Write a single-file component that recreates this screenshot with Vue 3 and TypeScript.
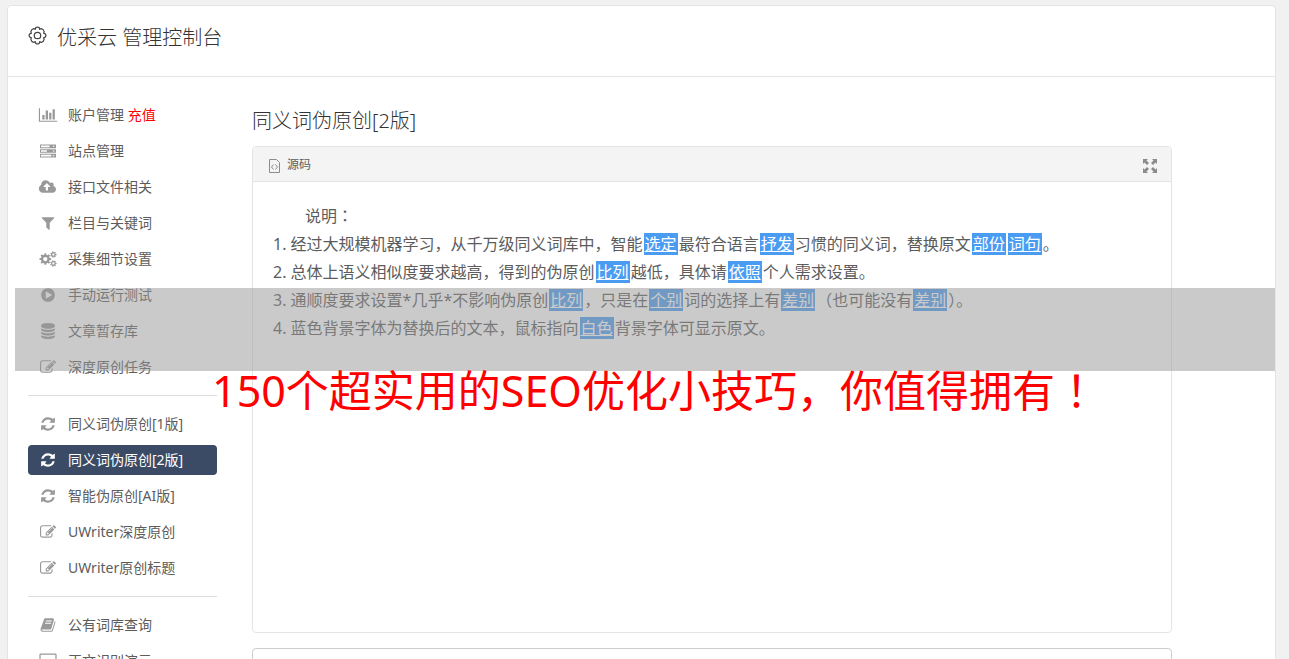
<script setup lang="ts">
type Icon = { box: string; d: string }
type Entry = { label: string; icon: string; extra?: string; active?: boolean }
type Piece = { text: string; kind: 'plain' | 'mark' | 'punct' }

const icons: Record<string, Icon> = {
  chart: { box: '0 0 2048 1792', d: 'M640 896v512h-256v-512h256zm384-512v1024h-256v-1024h256zm1024 1152v128h-2048v-1536h128v1408h1920zm-640-896v768h-256v-768h256zm384-384v1152h-256v-1152h256z' },
  server: { box: '0 0 1792 1792', d: 'M0 160h1792v416H0zM112 272v192h960V272zM1440 310v116h180V310zM0 688h1792v416H0zM112 800v192h660V800zM1440 838v116h180V838zM0 1216h1792v416H0zM112 1328v192h1160v-192zM1440 1366v116h180v-116z' },
  cloud: { box: '0 0 1920 1792', d: 'M1216 864q0-14-9-23l-352-352q-9-9-23-9t-23 9l-351 351q-10 12-10 24 0 14 9 23t23 9h224v352q0 13 9.5 22.5t22.5 9.5h192q13 0 22.5-9.5t9.5-22.5v-352h224q13 0 22.5-9.5t9.5-22.5zm640 288q0 159-112.5 271.5t-271.5 112.5h-1088q-185 0-316.5-131.5t-131.5-316.5q0-130 70-240t188-165q-2-30-2-43 0-212 150-362t362-150q156 0 285.5 87t188.5 231q71-62 166-62 106 0 181 75t75 181q0 76-41 138 130 31 213.5 135.5t83.5 238.5z' },
  filter: { box: '0 0 1792 1792', d: 'M1595 295q17 41-14 70l-493 493v742q0 42-39 59-13 5-25 5-27 0-45-19l-256-256q-19-19-19-45v-486l-493-493q-31-29-14-70 17-39 59-39h1280q42 0 59 39z' },
  cogs: { box: '0 0 1920 1792', d: [gear(660, 900, 660, 500, 8), ring(660, 900, 240), gear(1560, 400, 370, 270, 7), ring(1560, 400, 130), gear(1560, 1400, 370, 270, 7), ring(1560, 1400, 130)].join('') },
  play: { box: '0 0 1792 1792', d: 'M896 128q209 0 385.5 103t279.5 279.5 103 385.5-103 385.5-279.5 279.5-385.5 103-385.5-103-279.5-279.5-103-385.5 103-385.5 279.5-279.5 385.5-103zm384 823q32-18 32-55t-32-55l-544-320q-31-19-64-1-32 19-32 56v640q0 37 32 56 16 8 32 8 17 0 32-9z' },
  database: { box: '0 0 1792 1792', d: 'M896 768q237 0 443-43t325-127v170q0 69-103 128t-280 93.5-385 34.5-385-34.5-280-93.5-103-128v-170q119 84 325 127t443 43zm0 768q237 0 443-43t325-127v170q0 69-103 128t-280 93.5-385 34.5-385-34.5-280-93.5-103-128v-170q119 84 325 127t443 43zm0-384q237 0 443-43t325-127v170q0 69-103 128t-280 93.5-385 34.5-385-34.5-280-93.5-103-128v-170q119 84 325 127t443 43zm0-1152q208 0 385 34.5t280 93.5 103 128v128q0 69-103 128t-280 93.5-385 34.5-385-34.5-280-93.5-103-128v-128q0-69 103-128t280-93.5 385-34.5z' },
  edit: { box: '0 0 1792 1792', d: 'M888 1184l116-116-152-152-116 116v56h96v96h56zm440-720q-16-16-33 1l-350 350q-17 17-1 33t33-1l350-350q17-17 1-33zm80 594v190q0 119-84.5 203.5t-203.5 84.5h-832q-119 0-203.5-84.5t-84.5-203.5v-832q0-119 84.5-203.5t203.5-84.5h832q63 0 117 25 15 7 18 23 3 17-9 29l-49 49q-14 14-32 8-23-6-45-6h-832q-66 0-113 47t-47 113v832q0 66 47 113t113 47h832q66 0 113-47t47-113v-126q0-13 9-22l64-64q15-15 35-7t20 29zm-96-738l288 288-672 672h-288v-288zm444 132l-92 92-288-288 92-92q28-28 68-28t68 28l152 152q28 28 28 68t-28 68z' },
  refresh: { box: '0 0 1792 1792', d: 'M1639 1056q0 5-1 7-64 268-268 434.5t-478 166.5q-146 0-282.5-55t-243.5-157l-129 129q-19 19-45 19t-45-19-19-45v-448q0-26 19-45t45-19h448q26 0 45 19t19 45-19 45l-137 137q71 66 161 102t187 36q134 0 250-65t186-179q11-17 53-117 8-23 30-23h192q13 0 22.5 9.5t9.5 22.5zm25-800v448q0 26-19 45t-45 19h-448q-26 0-45-19t-19-45 19-45l138-138q-148-137-349-137-134 0-250 65t-186 179q-11 17-53 117-8 23-30 23h-199q-13 0-22.5-9.5t-9.5-22.5v-7q65-268 270-434.5t480-166.5q146 0 284 55.5t245 156.5l130-129q19-19 45-19t45 19 19 45z' },
  book: { box: '0 0 1792 1792', d: 'M1703 478q40 57 18 129l-275 906q-19 64-76.5 107.5t-122.5 43.5h-923q-77 0-148.5-53.5t-99.5-131.5q-24-67-2-127 0-4 3-27t4-37q1-8-3-21.5t-3-19.5q2-11 8-21t16.500-23.500 16.500-23.500q23-38 45-91.500t30-91.500q3-10 .5-30t-.5-28q3-11 17-28t17-23q21-36 42-92t25-90q1-9-2.500-32t.5-28q4-13 22-30.500t22-22.500q19-26 42.500-84.500t27.500-96.500q1-8-3-25.500t-2-26.500q2-8 9-18t18-23 17-21q8-12 16.500-30.500t15-35 16-36 19.500-32 26.500-23.500 36-11.500 47.500 5.500l-1 3q38-9 51-9h761q74 0 114 56t18 130l-274 906q-36 119-71.500 153.500t-128.500 34.500h-869q-27 0-38 15-11 16-1 43 24 70 144 70h923q29 0 56-15.500t35-41.500l300-987q7-22 5-57 38 15 59 43zm-1064 2q-4 13 2 22.500t20 9.500h608q13 0 25.500-9.500t16.500-22.500l21-64q4-13-2-22.500t-20-9.500h-608q-13 0-25.500 9.500t-16.500 22.500zm-83 256q-4 13 2 22.500t20 9.500h608q13 0 25.500-9.500t16.500-22.500l21-64q4-13-2-22.500t-20-9.500h-608q-13 0-25.500 9.500t-16.500 22.500z' },
  laptop: { box: '0 0 2048 1792', d: 'M200 64h1648q140 0 140 140v1124H60V204q0-140 140-140zM200 192v1000h1648V192zM0 1408h2048v100q0 60-100 60H100q-100 0-100-60z' },
}

/* Toothed wheel outline centred on (cx, cy). */
function gear(cx: number, cy: number, outer: number, inner: number, teeth: number): string {
  const points: string[] = []
  const step = (Math.PI * 2) / teeth
  for (let i = 0; i < teeth; i++) {
    const corners: [number, number][] = [[-0.3, inner], [-0.19, outer], [0.19, outer], [0.3, inner]]
    for (const [shift, radius] of corners) {
      const angle = (i + shift) * step
      points.push(`${(cx + Math.cos(angle) * radius).toFixed(1)} ${(cy + Math.sin(angle) * radius).toFixed(1)}`)
    }
  }
  return `M${points.join('L')}Z`
}

function ring(cx: number, cy: number, r: number): string {
  return `M${cx - r} ${cy}a${r} ${r} 0 1 0 ${r * 2} 0a${r} ${r} 0 1 0 ${-r * 2} 0Z`
}

/* Replaced words are written in braces: {word}. */
function split(source: string): Piece[] {
  return source
    .split(/(\{[^}]+\}|[：！])/)
    .filter((part) => part.length > 0)
    .map((part): Piece => {
      if (part.startsWith('{')) return { text: part.slice(1, -1), kind: 'mark' }
      if ('：！'.includes(part)) return { text: part, kind: 'punct' }
      return { text: part, kind: 'plain' }
    })
}

const groups: Entry[][] = [
  [
    { label: '账户管理', extra: '充值', icon: 'chart' },
    { label: '站点管理', icon: 'server' },
    { label: '接口文件相关', icon: 'cloud' },
    { label: '栏目与关键词', icon: 'filter' },
    { label: '采集细节设置', icon: 'cogs' },
    { label: '手动运行测试', icon: 'play' },
    { label: '文章暂存库', icon: 'database' },
    { label: '深度原创任务', icon: 'edit' },
  ],
  [
    { label: '同义词伪原创[1版]', icon: 'refresh' },
    { label: '同义词伪原创[2版]', icon: 'refresh', active: true },
    { label: '智能伪原创[AI版]', icon: 'refresh' },
    { label: 'UWriter深度原创', icon: 'edit' },
    { label: 'UWriter原创标题', icon: 'edit' },
  ],
  [
    { label: '公有词库查询', icon: 'book' },
    { label: '正文识别演示', icon: 'laptop' },
  ],
]

const intro = split('说明：')
const notes = [
  '1. 经过大规模机器学习，从千万级同义词库中，智能{选定}最符合语言{抒发}习惯的同义词，替换原文{部份}{词句}。',
  '2. 总体上语义相似度要求越高，得到的伪原创{比列}越低，具体请{依照}个人需求设置。',
  '3. 通顺度要求设置*几乎*不影响伪原创{比列}，只是在{个别}词的选择上有{差别}（也可能没有{差别}）。',
  '4. 蓝色背景字体为替换后的文本，鼠标指向{白色}背景字体可显示原文。',
].map(split)
const promo = split('150个超实用的SEO优化小技巧，你值得拥有！')
</script>

<template>
  <div class="page">
    <div class="frame">
      <header class="top">
        <svg class="settings" viewBox="0 0 20 20" aria-hidden="true">
          <path d="M8.300 1.600Q10 .6 11.700 1.600L12.300 3.300L14 2.700Q16.400 3.200 17 5.900L16.500 7.500L18.200 8.300Q19.400 10 18.200 11.700L16.500 12.500L17 14.100Q16.400 16.800 14 17.300L12.300 16.700L11.700 18.400Q10 19.400 8.300 18.400L7.700 16.700L6 17.300Q3.600 16.800 3 14.100L3.500 12.500L1.800 11.700Q.6 10 1.800 8.300L3.500 7.500L3 5.900Q3.600 3.200 6 2.700L7.700 3.300Z" />
          <circle cx="10" cy="10" r="3.400" />
        </svg>
        <h1>优采云 管理控制台</h1>
      </header>

      <div class="body">
        <nav class="side">
          <ul v-for="(group, g) in groups" :key="g">
            <li v-for="entry in group" :key="entry.label">
              <a href="#" :class="{ active: entry.active }">
                <svg :viewBox="icons[entry.icon].box" aria-hidden="true">
                  <path :d="icons[entry.icon].d" fill-rule="evenodd" />
                </svg>
                <span>{{ entry.label }} <em v-if="entry.extra">{{ entry.extra }}</em></span>
              </a>
            </li>
          </ul>
        </nav>

        <main class="main">
          <h2>同义词伪原创[2版]</h2>
          <section class="editor">
            <div class="toolbar">
              <button type="button" class="source">
                <svg viewBox="0 0 14 14" aria-hidden="true">
                  <path d="M2.500 .5H9.500L12.500 3.500V13.500H2.500Z" />
                  <path d="M6.500 5.500L4.500 8L6.500 10.500M8.500 5.500L10.500 8L8.500 10.500" />
                </svg>
                源码
              </button>
              <button type="button" class="expand" aria-label="全屏">
                <svg viewBox="0 0 14 14" aria-hidden="true">
                  <path d="M0 0h5L3.500 1.500L6 4L4 6L1.500 3.500L0 5zM14 0v5L12.500 3.500L10 6L8 4L10.500 1.500L9 0zM0 14V9L1.500 10.500L4 8L6 10L3.500 12.500L5 14zM14 14H9L10.500 12.500L8 10L10 8L12.500 10.500L14 9z" />
                </svg>
              </button>
            </div>
            <div class="content">
              <p class="intro"><span v-for="(p, i) in intro" :key="i" :class="p.kind">{{ p.text }}</span></p>
              <p v-for="(line, n) in notes" :key="n"><template v-for="(p, i) in line" :key="i"><mark v-if="p.kind === 'mark'">{{ p.text }}</mark><span v-else :class="p.kind">{{ p.text }}</span></template></p>
            </div>
          </section>
          <textarea class="input" aria-label="正文"></textarea>
        </main>
      </div>
    </div>

    <div class="promo">
      <div class="shade"></div>
      <p><span v-for="(p, i) in promo" :key="i" :class="p.kind">{{ p.text }}</span></p>
    </div>
  </div>
</template>

<style>
body {
  background: #f1f1f1;
}
</style>

<style scoped>
.page {
  position: relative;
  box-sizing: border-box;
  height: 100vh;
  overflow: hidden;
  padding: 5px 13px 0 7px;
  color: #5c5c5c;
  font: 14px/20px "Noto Sans", "Noto Sans CJK SC", sans-serif;
}
h1, h2, p, ul {
  margin: 0;
  padding: 0;
  font-weight: 400;
}
.punct {
  font-family: "Noto Sans", "Noto Sans CJK TC", sans-serif;
}
.frame {
  border: 1px solid #e4e4e4;
  border-radius: 4px;
  background: #fff;
}
.top {
  display: flex;
  align-items: flex-start;
  gap: 10px;
  height: 30px;
  padding: 17px 20px 23px;
  border-bottom: 1px solid #e4e4e4;
  color: #333;
}
h1 {
  font-size: 20px;
  font-weight: 300;
  line-height: 30px;
}
.settings {
  width: 19px;
  height: 19px;
  margin-top: 3px;
  fill: none;
  stroke: #444;
  stroke-width: 1.300;
}
.body {
  display: flex;
  gap: 35px;
  padding: 23px 103px 20px 20px;
}
.side {
  flex: 0 0 189px;
}
ul {
  display: grid;
  gap: 6px;
  list-style: none;
}
ul + ul {
  margin-top: 13px;
  padding-top: 13px;
  border-top: 1px solid #ddd;
}
.side a {
  display: flex;
  align-items: center;
  gap: 10px;
  height: 30px;
  padding: 0 10px;
  border-radius: 4px;
  color: #5c5c5c;
  text-decoration: none;
  white-space: nowrap;
}
.side svg {
  width: 20px;
  height: 16px;
  fill: #999;
}
.side em {
  color: #f00;
  font-style: normal;
}
.side .active {
  background: #3b4b66;
  color: #fff;
}
.side .active svg {
  fill: #fff;
}
.main {
  flex: 1;
  min-width: 0;
}
h2 {
  padding: 6px 0 10px;
  color: #333;
  font-size: 20px;
  font-weight: 300;
  line-height: 30px;
}
.editor {
  overflow: hidden;
  border: 1px solid #e4e4e4;
  border-radius: 4px;
}
.toolbar {
  display: flex;
  align-items: center;
  justify-content: space-between;
  height: 34px;
  padding: 0 14px;
  border-bottom: 1px solid #e4e4e4;
  background: #f4f4f4;
}
button {
  display: flex;
  align-items: center;
  gap: 6px;
  padding: 2px 0 0;
  border: 0;
  background: none;
  color: #5c5c5c;
  font: inherit;
  font-size: 12px;
}
.source svg {
  width: 14px;
  height: 14px;
  margin-top: 2px;
  fill: none;
  stroke: #8c8c8c;
  stroke-width: 1;
}
.expand svg {
  width: 14px;
  height: 14px;
  margin-top: 2px;
  fill: #8c8c8c;
}
.content {
  min-height: 410px;
  padding: 20px;
  font-size: 16px;
  line-height: 28px;
}
.intro {
  text-indent: 2em;
}
mark {
  margin: 0 1px;
  padding: 0 1px;
  background: #4a9cf2;
  color: #fff;
  text-decoration: underline;
}
.input {
  display: block;
  box-sizing: border-box;
  width: 100%;
  height: 120px;
  margin-top: 15px;
  border: 1px solid #ccc;
  border-radius: 4px;
  resize: none;
}
.promo {
  position: absolute;
  top: 288px;
  right: 14px;
  left: 15px;
  pointer-events: none;
}
.shade {
  height: 83px;
  background: rgba(150, 150, 150, 0.5);
}
.promo p {
  padding-left: 20px;
  color: #f00;
  font-size: 43px;
  line-height: 40px;
  text-align: center;
  white-space: nowrap;
}
</style>
